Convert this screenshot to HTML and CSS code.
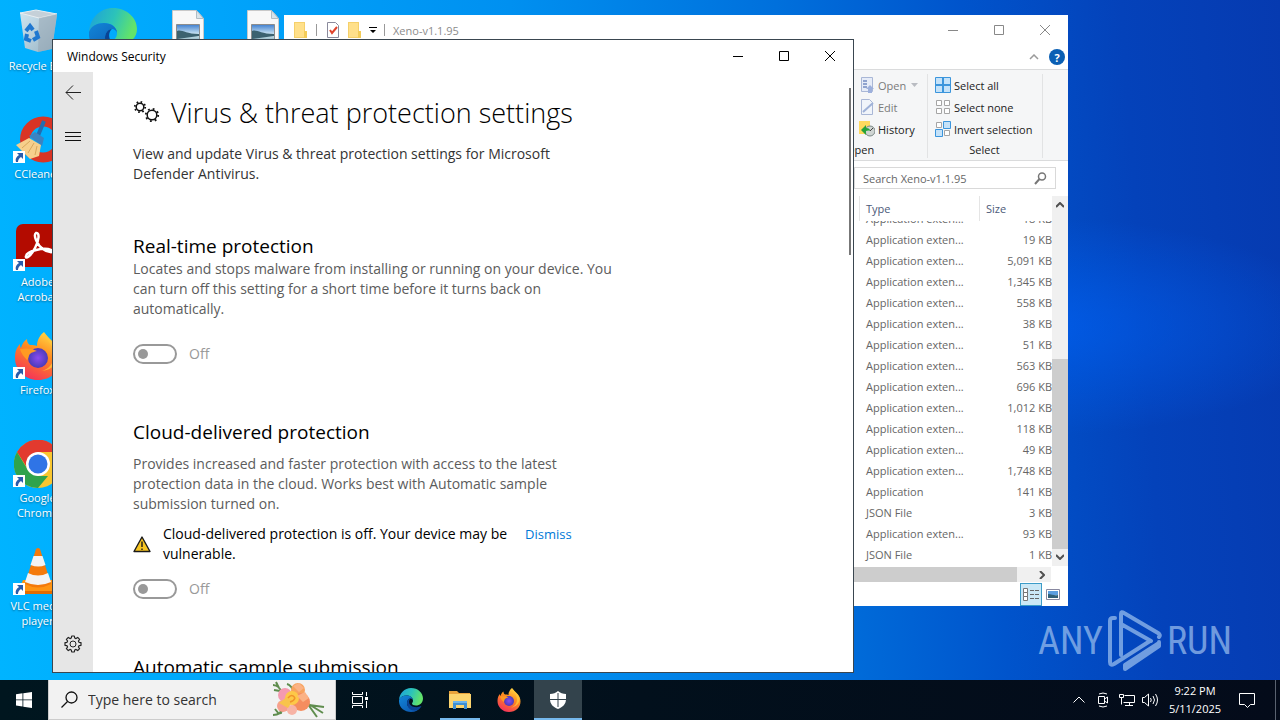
FILE: index.html
```html
<!DOCTYPE html>
<html lang="en">
<head>
    <meta charset="UTF-8">
    <meta name="viewport" content="width=device-width, initial-scale=1.0">
    <title>Desktop</title>
    <link rel="stylesheet" href="styles.css">
</head>
<body>
    <!-- shared symbols -->
    <svg class="symbols" aria-hidden="true">
        <defs>
            <linearGradient id="edgeTop" x1="0" y1="0" x2="1" y2="0.3">
                <stop offset="0" stop-color="#1c9fdd"/>
                <stop offset="0.55" stop-color="#2cc3b9"/>
                <stop offset="1" stop-color="#62e36a"/>
            </linearGradient>
            <linearGradient id="edgeLow" x1="0" y1="0" x2="1" y2="1">
                <stop offset="0" stop-color="#1286d8"/>
                <stop offset="1" stop-color="#0b4fa8"/>
            </linearGradient>
            <linearGradient id="foxFlame" x1="0.8" y1="0" x2="0.3" y2="1">
                <stop offset="0" stop-color="#ffe14a"/>
                <stop offset="0.45" stop-color="#ff8a1e"/>
                <stop offset="1" stop-color="#f4305c"/>
            </linearGradient>
            <radialGradient id="foxCore">
                <stop offset="0" stop-color="#8a4cf0"/>
                <stop offset="1" stop-color="#4a3bb8"/>
            </radialGradient>
            <linearGradient id="sky" x1="0" y1="0" x2="0" y2="1">
                <stop offset="0" stop-color="#3f7fd0"/>
                <stop offset="0.6" stop-color="#d7ecf5"/>
                <stop offset="1" stop-color="#7fa9b8"/>
            </linearGradient>
            <linearGradient id="bin" x1="0" y1="0" x2="1" y2="1">
                <stop offset="0" stop-color="#e4eaee"/>
                <stop offset="1" stop-color="#a8b4be"/>
            </linearGradient>
        </defs>
        <symbol id="edge" viewBox="0 0 48 48">
            <path fill="url(#edgeTop)" d="M0 24C1 10 11 0 24 0c14 0 24 10 24 21 0 9-7 14-14 14-5 0-8-2-8-4 0-1 2-2 2-6 0-6-6-10-13-10C8 15 2 19 0 24z"/>
            <path fill="url(#edgeLow)" d="M0 24c2-6 8-9 15-9 7 0 13 4 13 10-1-3-3-4-5-4-4 0-7 4-7 9 0 8 8 13 16 13 5 0 9-2 12-5-5 6-11 10-20 10C10 48-1 38 0 24z"/>
            <path fill="#0a4394" d="M16 30c0-5 3-9 7-9-5 4-4 15 8 17 6 1 10-1 14-2-3 6-9 9-14 9-9 0-15-7-15-15z"/>
        </symbol>
        <symbol id="firefox" viewBox="0 0 48 48">
            <path fill="url(#foxFlame)" d="M30 0c3 4 5 6 8 9 7 6 9 12 9 18 0 12-10 21-23 21S1 38 1 26c0-7 2-11 5-14 0 2 0 3 1 4 1-4 3-7 6-9 0 3 1 5 3 6 3 0 5 0 7 1 0-6 3-11 7-14z"/>
            <circle cx="24" cy="26" r="10" fill="url(#foxCore)"/>
            <path fill="#ff9a22" d="M6 17c5-1 12-1 17 2-3 1-5 1-7 3-2 2-1 5-3 6-3-3-6-7-7-11z"/>
            <path fill="#ffc53a" opacity="0.8" d="M30 1c1 8 10 10 10 22 0 8-5 14-12 16 10-1 17-8 17-17 0-8-8-13-15-21z"/>
        </symbol>
        <symbol id="photoFile" viewBox="0 0 48 48">
            <path fill="#f8f8f8" stroke="#c9c9c9" d="M8.500 2.500h24l7 8v35h-31z"/>
            <path fill="#d8e4ea" stroke="#b0bcc4" d="M32.500 2.500v8h7z"/>
            <path fill="url(#sky)" stroke="#8d8d8d" d="M12.500 16.500h23v17h-23z"/>
            <path fill="#3c6270" d="M13 23c5-2 8 3 22 3v2l-22 3z"/>
        </symbol>
        <symbol id="shortcut" viewBox="0 0 12 12">
            <path fill="#fff" d="M0 0h12v12H0z"/>
            <path fill="#2a5caa" d="M4 2h6v6L8 6c-2 1-3 3-3 5H3c-1-3 0-5 3-7z"/>
        </symbol>
        <symbol id="folder" viewBox="0 0 16 16">
            <path fill="#f5d06a" d="M1 0h11v16H1z"/>
            <path fill="#ffe08a" d="M2 1h9v14H2z"/>
            <path fill="#f3cc58" d="M11 9h3v7h-3z"/>
        </symbol>
    </svg>

    <div class="desktop">
        <div class="desktop-icons">
            <div class="icon-column">
                <div class="desktop-icon">
                    <svg viewBox="0 0 48 48">
                        <path fill="url(#bin)" fill-opacity="0.9" d="M6 5l37 2-5 34-14 3-13-4z"/>
                        <path fill="#c5d0d8" stroke="#e9eef1" d="M6 5l16-3 21 4-18 4z"/>
                        <path fill="#93a1ad" fill-opacity="0.5" d="M25 10l18-4-5 35-14 3z"/>
                        <path fill="none" stroke="#1f78d0" stroke-width="4" d="M12 23l4-5 3 4M22 23l2 6-5 3M17 33l-5-2 1-5"/>
                    </svg>
                    <span>Recycle Bin</span>
                </div>
                <div class="desktop-icon">
                    <svg viewBox="0 0 48 48">
                        <path fill="none" stroke="#d93425" stroke-width="10" d="M42 11A18 18 0 1 0 42 36"/>
                        <path stroke="#246cb0" stroke-width="4" d="M30 5L23 22"/>
                        <path fill="#3b83c2" d="M15 20l6-4 9 6-2 8z"/>
                        <path fill="#f6cf8c" d="M2 29l13-7 12 7-2 11-9 3z"/>
                        <path fill="none" stroke="#d8a75c" d="M8 32l8-7M14 37l6-10M21 39l2-9"/>
                    </svg>
                    <svg class="shortcut"><use href="#shortcut"/></svg>
                    <span>CCleaner</span>
                </div>
                <div class="desktop-icon">
                    <svg viewBox="0 0 48 48">
                        <rect x="2" y="0" width="46" height="43" rx="7" fill="#b30b00"/>
                        <path fill="none" stroke="#fff" stroke-width="2.500" d="M22 9c4-1 3 8-1 15-4 8-10 12-9 8 1-5 18-9 25-6 4 3-3 3-8-1C23 21 19 11 22 9z"/>
                    </svg>
                    <svg class="shortcut"><use href="#shortcut"/></svg>
                    <span>Adobe Acrobat</span>
                </div>
                <div class="desktop-icon">
                    <svg><use href="#firefox"/></svg>
                    <svg class="shortcut"><use href="#shortcut"/></svg>
                    <span>Firefox</span>
                </div>
                <div class="desktop-icon">
                    <svg viewBox="0 0 48 48">
                        <circle cx="24" cy="24" r="24" fill="#f9c62f"/>
                        <path fill="#e23a2e" d="M3 12a24 24 0 0 1 42 0H24L14 29z"/>
                        <path fill="#2fa34c" d="M3 12l11 18 10 6h10L24 48A24 24 0 0 1 3 12z"/>
                        <circle cx="24" cy="24" r="12" fill="#fff"/>
                        <circle cx="24" cy="24" r="9.500" fill="#2f74e6"/>
                    </svg>
                    <svg class="shortcut"><use href="#shortcut"/></svg>
                    <span>Google Chrome</span>
                </div>
                <div class="desktop-icon">
                    <svg viewBox="0 0 48 48">
                        <path fill="#ff9412" d="M9 32h30l8 14H3z"/>
                        <path fill="#e36c00" d="M4 43h42v3H3z"/>
                        <path fill="#f47a0b" d="M22 1q2-2 4 0l11 35q-13 7-26 0z"/>
                        <path fill="#f3f3f3" d="M19.500 8h9l3 9q-7 3-15 0zM14 25q10 5 20 0l3 9q-13 6-26 0z"/>
                    </svg>
                    <svg class="shortcut"><use href="#shortcut"/></svg>
                    <span>VLC media player</span>
                </div>
            </div>
            <div class="icon-column">
                <div class="desktop-icon"><svg><use href="#edge"/></svg></div>
            </div>
            <div class="icon-column">
                <div class="desktop-icon"><svg><use href="#photoFile"/></svg></div>
            </div>
            <div class="icon-column">
                <div class="desktop-icon"><svg><use href="#photoFile"/></svg></div>
            </div>
        </div>

        <div class="watermark">
            <span>ANY</span>
            <svg width="56" height="62" viewBox="0 0 56 62">
                <path fill="none" stroke="currentColor" stroke-width="4" stroke-linejoin="round" stroke-linecap="round" d="M8 8H6q-3 0-3 3v41q0 4 4 2l36-23M14 36V4q0-3 3-1l34 20q3 2 1 4M14 14l30 17M14 45V20M52 33L18 55v4l34-23v-4"/>
            </svg>
            <span>RUN</span>
        </div>

        <!-- file explorer -->
        <section class="window explorer">
            <header class="explorer-title">
                <svg width="16" height="16"><use href="#folder"/></svg>
                <i class="separator"></i>
                <svg class="quick" width="16" height="16" viewBox="0 0 16 16">
                    <path fill="#fff" stroke="#8a8a9c" d="M2.500.5h8l3 3v12h-11z"/>
                    <path fill="none" stroke="#e0442c" stroke-width="2" d="M5 8l2 3 5-6"/>
                </svg>
                <svg width="16" height="16"><use href="#folder"/></svg>
                <svg class="drop" width="8" height="8" viewBox="0 0 8 8"><path d="M0 1h8v1H0zM1 4h6L4 7z"/></svg>
                <i class="separator"></i>
                <span class="explorer-name">Xeno-v1.1.95</span>
                <div class="caption-buttons">
                    <button aria-label="Minimize"><svg width="12" height="12" viewBox="0 0 12 12"><path d="M1 6.500h10"/></svg></button>
                    <button aria-label="Maximize"><svg width="12" height="12" viewBox="0 0 12 12"><path d="M1.500 1.500h9v9h-9z"/></svg></button>
                    <button aria-label="Close"><svg width="12" height="12" viewBox="0 0 12 12"><path d="M1 1l10 10M11 1L1 11"/></svg></button>
                </div>
            </header>
            <div class="explorer-tabs">
                <button aria-label="Collapse ribbon"><svg width="10" height="6" viewBox="0 0 10 6"><path fill="none" stroke="#9a9a9a" stroke-width="1.500" d="M1 5l4-4 4 4"/></svg></button>
                <button class="help" aria-label="Help">?</button>
            </div>
            <div class="ribbon">
                <div class="ribbon-group open-group">
                    <button class="dim">
                        <svg width="16" height="16" viewBox="0 0 16 16"><path fill="#e6ecf8" stroke="#a9b7d6" d="M2.500.5h11v14h-11z"/><path stroke="#8fa3cf" stroke-width="2" d="M4 4h4M4 7h4M4 10h4"/><path fill="#9db0dc" d="M9 16v-4H7l4-4 4 4h-2v4z"/></svg>
                        Open
                        <svg class="arrow" width="7" height="4" viewBox="0 0 7 4"><path fill="#b9bcc2" d="M0 0h7L3.500 4z"/></svg>
                    </button>
                    <button class="dim">
                        <svg width="16" height="16" viewBox="0 0 16 16"><path fill="#f0f4fa" stroke="#a9b7d6" d="M2.500.5h8l3 3v12h-11z"/><path stroke="#9fb2d8" stroke-width="2" d="M4 13L14 4"/></svg>
                        Edit
                    </button>
                    <button>
                        <svg width="16" height="16" viewBox="0 0 16 16"><path fill="#ffd95e" d="M0 0h11v13H0z"/><circle cx="11" cy="10" r="5" fill="#cfd5d3" stroke="#7a8785"/><path fill="#27a23b" d="M2 9l5-5v3c3 0 4 1 4 3-2-1-3 0-4 0v4z"/><path stroke="#444" d="M11 10l3-3"/></svg>
                        History
                    </button>
                    <span class="group-name">Open</span>
                </div>
                <div class="ribbon-group select-group">
                    <button>
                        <svg width="16" height="16" viewBox="0 0 16 16"><path fill="#c4e2f9" stroke="#3b95dc" d="M.5.5h15v15H.5z"/><path stroke="#3b95dc" stroke-width="2" d="M8 0v16M0 8h16"/></svg>
                        Select all
                    </button>
                    <button>
                        <svg width="16" height="16" viewBox="0 0 16 16"><path fill="#fff" stroke="#a5a5a5" d="M1.500 1.500h5v5h-5zM9.500 1.500h5v5h-5zM1.500 9.500h5v5h-5zM9.500 9.500h5v5h-5z"/></svg>
                        Select none
                    </button>
                    <button>
                        <svg width="16" height="16" viewBox="0 0 16 16"><path fill="#fff" stroke="#a5a5a5" d="M1.500 1.500h5v5h-5zM9.500 9.500h5v5h-5z"/><path fill="#c4e2f9" stroke="#3b95dc" d="M8.500.5h7v7h-7zM.5 8.500h7v7h-7z"/></svg>
                        Invert selection
                    </button>
                    <span class="group-name">Select</span>
                </div>
            </div>
            <div class="explorer-search">
                <input type="text" placeholder="Search Xeno-v1.1.95" aria-label="Search Xeno-v1.1.95">
                <svg width="13" height="13" viewBox="0 0 13 13"><circle cx="8" cy="4.500" r="3.500" fill="none" stroke="#777" stroke-width="1.500"/><path stroke="#777" stroke-width="2" d="M5.500 7L1 12"/></svg>
            </div>
            <div class="explorer-body">
                <div class="file-list">
                    <div class="list-header">
                        <button class="col-type">Type</button>
                        <button class="col-size">Size</button>
                    </div>
                    <div class="list-rows">
                        <table>
                            <tbody id="fileRows"></tbody>
                        </table>
                    </div>
                </div>
                <div class="scroll-vertical">
                    <svg width="8" height="6" viewBox="0 0 8 6"><path d="M0 5l4-4 4 4"/></svg>
                    <div class="thumb"></div>
                    <svg width="8" height="6" viewBox="0 0 8 6"><path d="M0 1l4 4 4-4"/></svg>
                </div>
            </div>
            <div class="scroll-horizontal">
                <div class="thumb"></div>
                <svg width="6" height="8" viewBox="0 0 6 8"><path d="M1 0l4 4-4 4"/></svg>
            </div>
            <footer class="explorer-status">
                <button class="active" aria-label="Details view"><svg width="16" height="14" viewBox="0 0 16 14"><path fill="#fff" stroke="#777" d="M.5.5h4v4h-4zM.5 4.500h4v4h-4zM.5 8.500h4v4h-4z"/><path stroke="#666" d="M7 2.500h4M12 2.500h4M7 6.500h4M12 6.500h4M7 10.500h4M12 10.500h4"/></svg></button>
                <button aria-label="Large icons view"><svg width="14" height="11" viewBox="0 0 14 11"><path fill="#fff" stroke="#8888a0" d="M.5.5h13v10H.5z"/><path fill="#5b9ee0" d="M2 2h10v4H2z"/><path fill="#2f5f78" d="M2 5c4 0 6 2 10 1v3H2z"/></svg></button>
            </footer>
        </section>

        <!-- windows security -->
        <section class="window security">
            <header class="security-title">
                <span>Windows Security</span>
                <div class="caption-buttons">
                    <button aria-label="Minimize"><svg width="12" height="12" viewBox="0 0 12 12"><path d="M1 6.500h10"/></svg></button>
                    <button aria-label="Maximize"><svg width="12" height="12" viewBox="0 0 12 12"><path d="M1.500 1.500h9v9h-9z"/></svg></button>
                    <button aria-label="Close"><svg width="12" height="12" viewBox="0 0 12 12"><path d="M1 1l10 10M11 1L1 11"/></svg></button>
                </div>
            </header>
            <div class="security-body">
                <nav class="side-nav">
                    <button aria-label="Back"><svg width="16" height="16" viewBox="0 0 16 16"><path fill="none" stroke="#222" d="M16 8.500H1M8 1.500l-7 7 7 7"/></svg></button>
                    <button aria-label="Menu"><svg width="16" height="16" viewBox="0 0 16 16"><path stroke="#111" d="M0 4.500h16M0 8.500h16M0 12.500h16"/></svg></button>
                    <button class="settings" aria-label="Settings">
                        <svg width="18" height="18" viewBox="0 0 18 18"><path fill="none" stroke="#222" stroke-width="1.200" stroke-linejoin="round" d="M7.700 1h2.600l.4 2 1.300.6L13.700 2.400l1.900 1.900-1.200 1.700.6 1.300 2 .4v2.600l-2 .4-.6 1.300 1.200 1.700-1.900 1.900-1.700-1.200-1.300.6-.4 2H7.700l-.4-2-1.300-.6-1.700 1.200-1.900-1.900L3.600 12 3 10.700l-2-.4V7.700l2-.4L3.600 6 2.400 4.300l1.900-1.900L6 3.600 7.300 3z"/><circle cx="9" cy="9" r="3" fill="none" stroke="#222"/></svg>
                    </button>
                </nav>
                <main class="settings-page">
                    <h1>
                        <svg width="28" height="28" viewBox="0 0 28 28">
                            <g fill="none" stroke="#111">
                                <circle cx="7" cy="8" r="3.800" stroke-width="1.500"/>
                                <circle cx="7" cy="8" r="5.200" stroke-width="1.800" stroke-dasharray="1.600 2.484"/>
                                <circle cx="19" cy="16" r="4.800" stroke-width="1.500"/>
                                <circle cx="19" cy="16" r="6.200" stroke-width="1.800" stroke-dasharray="1.800 3.070"/>
                            </g>
                        </svg>
                        Virus &amp; threat protection settings
                    </h1>
                    <p class="intro">View and update Virus &amp; threat protection settings for Microsoft Defender Antivirus.</p>

                    <section class="setting">
                        <h2>Real-time protection</h2>
                        <p class="wide">Locates and stops malware from installing or running on your device. You can turn off this setting for a short time before it turns back on automatically.</p>
                        <label class="toggle first-toggle"><input type="checkbox" disabled><span>Off</span></label>
                    </section>

                    <section class="setting">
                        <h2>Cloud-delivered protection</h2>
                        <p class="spaced">Provides increased and faster protection with access to the latest protection data in the cloud. Works best with Automatic sample submission turned on.</p>
                        <div class="warning">
                            <svg width="18" height="18" viewBox="0 0 18 18"><path fill="#f7c520" stroke="#1a1a1a" stroke-width="1.400" stroke-linejoin="round" d="M9 2l8 14.500H1z"/><path stroke="#1a1a1a" stroke-width="1.400" d="M9 6.500v5.500M9 13.500V15"/></svg>
                            <span class="warning-text">Cloud-delivered protection is off. Your device may be vulnerable.</span>
                            <a href="#">Dismiss</a>
                        </div>
                        <label class="toggle"><input type="checkbox" disabled><span>Off</span></label>
                    </section>

                    <section class="setting">
                        <h2>Automatic sample submission</h2>
                    </section>
                    <div class="page-scroll"></div>
                </main>
            </div>
        </section>
    </div>

    <footer class="taskbar">
        <button class="start" aria-label="Start"><svg width="16" height="16" viewBox="0 0 16 16"><path fill="#fff" d="M0 2.300l6.500-1v6.200H0zM7.300 1.200L16 0v7.500H7.300zM0 8.300h6.500v6.300l-6.500-1zM7.300 8.300H16V16l-8.700-1.300z"/></svg></button>
        <div class="task-search">
            <svg width="17" height="17" viewBox="0 0 17 17"><circle cx="10.500" cy="6.500" r="5.500" fill="none" stroke="#111" stroke-width="1.300"/><path stroke="#111" stroke-width="1.300" d="M6.500 10.500L.5 16.500"/></svg>
            <input type="text" placeholder="Type here to search" aria-label="Type here to search">
            <svg class="flowers" width="54" height="38" viewBox="0 0 54 38">
                <g fill="none" stroke="#5f8d4e" stroke-width="2">
                    <path d="M2 4c4 0 8 4 10 9M3 9l6 1M5 1l3 6M16 3c4 1 6 5 8 9M2 34c5 0 9-2 12-8M4 28l4 5M9 27l1 6M36 22l16 10M36 22l10 14M38 24l15 2"/>
                </g>
                <circle cx="14" cy="14" r="7" fill="#f49ab0"/>
                <circle cx="27" cy="9" r="7" fill="#f7a35e"/>
                <circle cx="12" cy="25" r="6" fill="#f6a08e"/>
                <circle cx="30" cy="21" r="9" fill="#f58d5f"/>
                <circle cx="21" cy="29" r="5" fill="#f7b3a5"/>
                <circle cx="21" cy="17" r="7" fill="#fdc848"/>
                <path fill="#fbb284" d="M26 15l8-4 4 6-6 4zM22 5l6-3 5 5-5 4z"/>
                <path fill="#f8c44a" d="M8 22l8-6 6 4-5 7z"/>
                <path fill="none" stroke="#f0932a" stroke-width="1.500" d="M17 17q4-5 7 0M19 21q4-1 5-4"/>
            </svg>
        </div>
        <button class="task-view" aria-label="Task View"><svg width="16" height="16" viewBox="0 0 16 16"><path fill="none" stroke="#fff" d="M.5 0v2.500h10V0M.5 4.500h10v7H.5zM.5 16v-2.500h10V16M14.500 0v4M14.500 9v7"/><path fill="#fff" d="M13 5h3v3h-3z"/></svg></button>
        <div class="task-apps">
            <button aria-label="Microsoft Edge"><svg width="24" height="24"><use href="#edge"/></svg></button>
            <button class="running" aria-label="File Explorer">
                <svg width="22" height="20" viewBox="0 0 22 20"><path fill="#e9a33b" d="M0 1h8l2 2h11v4H0z"/><path fill="#fcd46e" d="M0 4h22v14H0z"/><path fill="#3f8fd2" d="M4 11h14v8h-3v-4H7v4H4z"/><path fill="#6cb4ec" d="M4 11h14v2H4z"/></svg>
            </button>
            <button aria-label="Firefox"><svg width="24" height="24"><use href="#firefox"/></svg></button>
            <button class="current" aria-label="Windows Security">
                <svg width="18" height="18" viewBox="0 0 18 18"><path fill="#fff" d="M9 0c2 2 5 3 8 3v5c0 5-3 8-8 10-5-2-8-5-8-10V3c3 0 6-1 8-3z"/><path stroke="#33434c" d="M9 2v14M1 8.500h16"/></svg>
            </button>
        </div>
        <div class="tray">
            <button aria-label="Show hidden icons"><svg width="12" height="8" viewBox="0 0 12 8"><path d="M.5 6.500L6 1l5.500 5.500"/></svg></button>
            <button aria-label="Camera"><svg width="12" height="16" viewBox="0 0 12 16"><path d="M1.500 4.500h6v7h-6zM7.500 7l3-2v6l-3-2M2 2q4-2 8 0M2 14q4 2 8 0"/></svg></button>
            <button aria-label="Network"><svg width="16" height="14" viewBox="0 0 16 14"><path d="M5.500 2.500h10v7h-11M.5 1.500h4v3h-4zM2.500 4.500v7M10.500 9.500v3M6 12.500h8"/></svg></button>
            <button aria-label="Volume"><svg width="18" height="14" viewBox="0 0 18 14"><path d="M.5 4.500h2l4-3.500v12l-4-3.500h-2zM8.500 5q1.500 2 0 4M11 3q3 4 0 8M13.500 1q4 6 0 12"/></svg></button>
            <button class="clock"><span>9:22 PM</span><span>5/11/2025</span></button>
            <button class="notify" aria-label="Notifications"><svg width="16" height="16" viewBox="0 0 16 16"><path d="M.5 1.500h15v11h-4l-3 3-3-3h-5z"/></svg></button>
            <button class="show-desktop" aria-label="Show desktop"></button>
        </div>
    </footer>

    <script>
        const files = [
            ["Application exten...", "18 KB"],
            ["Application exten...", "19 KB"],
            ["Application exten...", "5,091 KB"],
            ["Application exten...", "1,345 KB"],
            ["Application exten...", "558 KB"],
            ["Application exten...", "38 KB"],
            ["Application exten...", "51 KB"],
            ["Application exten...", "563 KB"],
            ["Application exten...", "696 KB"],
            ["Application exten...", "1,012 KB"],
            ["Application exten...", "118 KB"],
            ["Application exten...", "49 KB"],
            ["Application exten...", "1,748 KB"],
            ["Application", "141 KB"],
            ["JSON File", "3 KB"],
            ["Application exten...", "93 KB"],
            ["JSON File", "1 KB"]
        ];

        const fileRows = document.getElementById("fileRows");

        files.forEach(file => {
            const row = document.createElement("tr");
            file.forEach(value => {
                const cell = document.createElement("td");
                cell.textContent = value;
                row.appendChild(cell);
            });
            fileRows.appendChild(row);
        });
    </script>
</body>
</html>
```
FILE: styles.css
```css
* {
    box-sizing: border-box;
}

body {
    margin: 0;
    height: 100vh;
    display: flex;
    flex-direction: column;
    overflow: hidden;
    font-family: "Open Sans", "Noto Sans", sans-serif;
    font-size: 11px;
    color: #000;
}

h1, h2, p {
    margin: 0;
    font-weight: normal;
}

button {
    display: flex;
    align-items: center;
    justify-content: center;
    padding: 0;
    border: none;
    background: none;
    font: inherit;
    color: inherit;
}

input {
    font: inherit;
}

svg {
    display: block;
    flex-shrink: 0;
}

.symbols {
    position: absolute;
    width: 0;
    height: 0;
}

/* desktop */
.desktop {
    position: relative;
    flex: 1;
    overflow: hidden;
    background:
        radial-gradient(ellipse at 80% 48%, rgba(0, 98, 245, 0.7), rgba(0, 90, 230, 0) 22%),
        linear-gradient(86deg, #00b4ff 0%, #00a6fc 18%, #0090f0 42%, #0070dc 62%, #0054cc 76%, #0442ba 88%, #063ab0 100%);
}

.desktop-icons {
    display: flex;
}

.icon-column {
    width: 75px;
}

.desktop-icon {
    position: relative;
    display: flex;
    flex-direction: column;
    align-items: center;
    gap: 2px;
    height: 108px;
    padding: 8px 4px 0;
    line-height: 15px;
    text-align: center;
    color: #fff;
    text-shadow: 0 1px 2px rgba(0, 0, 0, 0.4);
}

.desktop-icon svg {
    width: 48px;
    height: 48px;
}

.desktop-icon .shortcut {
    position: absolute;
    left: 13px;
    top: 43px;
    width: 12px;
    height: 12px;
}

.watermark {
    position: absolute;
    right: 48px;
    bottom: 8px;
    display: flex;
    align-items: center;
    gap: 4px;
    font-family: "Liberation Sans Narrow", "Roboto Condensed", "Liberation Sans", sans-serif;
    font-size: 38px;
    color: rgba(160, 195, 240, 0.7);
}

/* windows */
.window {
    position: absolute;
    display: flex;
    flex-direction: column;
    background-color: #fff;
}

.caption-buttons {
    display: flex;
    align-self: stretch;
    margin-left: auto;
}

.caption-buttons button {
    width: 46px;
}

.caption-buttons path {
    fill: none;
    stroke: #000;
}

/* file explorer */
.explorer {
    left: 284px;
    top: 15px;
    width: 784px;
    height: 591px;
    color: #666;
}

.explorer-title {
    display: flex;
    align-items: center;
    height: 30px;
    padding-left: 9px;
}

.separator {
    width: 1px;
    height: 12px;
    margin: 0 8px 0 7px;
    background-color: #999;
}

.quick {
    margin-right: 6px;
}

.drop {
    margin-left: 6px;
}

.explorer-name {
    color: #8c8c8c;
}

.explorer-title .caption-buttons path {
    stroke: #888;
}

.explorer-tabs {
    display: flex;
    align-items: center;
    justify-content: flex-end;
    gap: 10px;
    height: 24px;
    padding-right: 3px;
}

.help {
    width: 16px;
    height: 16px;
    border-radius: 50%;
    background-color: #0a5fb4;
    color: #fff;
    font-weight: bold;
}

.ribbon {
    display: flex;
    justify-content: flex-end;
    height: 92px;
    padding: 4px 25px 0 0;
    background-color: #f5f6f7;
    border-top: 1px solid #dadbdc;
    border-bottom: 1px solid #dadbdc;
    color: #222;
}

.ribbon-group {
    display: flex;
    flex-direction: column;
    align-items: flex-start;
    height: 84px;
    border-right: 1px solid #e2e3e4;
}

.ribbon-group button {
    flex-shrink: 0;
    gap: 3px;
    height: 22px;
}

.open-group {
    width: 69px;
}

.select-group {
    width: 115px;
    padding-left: 7px;
}

.ribbon .dim {
    color: #7a7a7a;
}

.ribbon .arrow {
    margin-left: 2px;
}

.group-name {
    line-height: 20px;
}

.open-group .group-name {
    margin-left: -13px;
}

.select-group .group-name {
    align-self: center;
    padding-right: 8px;
}

.explorer-search {
    display: flex;
    align-items: center;
    align-self: flex-end;
    width: 202px;
    height: 22px;
    margin: 6px 12px 7px 0;
    padding: 0 8px;
    border: 1px solid #d9d9d9;
}

.explorer-search input {
    flex: 1;
    min-width: 0;
    padding: 0;
    border: none;
    outline: none;
}

.explorer-search input::placeholder {
    color: #666;
}

.explorer-body {
    flex: 1;
    display: flex;
    min-height: 0;
}

.file-list {
    flex: 1;
    display: flex;
    flex-direction: column;
    align-items: flex-end;
    min-height: 0;
}

.list-header {
    display: flex;
    height: 25px;
    color: #4c5a78;
}

.list-header button {
    justify-content: flex-start;
    padding-left: 6px;
    border-left: 1px solid #e5e5e5;
}

.col-type {
    width: 120px;
}

.col-size {
    width: 73px;
}

.list-rows {
    flex: 1;
    display: flex;
    flex-direction: column;
    justify-content: flex-end;
    width: 193px;
    min-height: 0;
    padding-bottom: 1px;
    overflow: hidden;
}

.list-rows table {
    border-collapse: collapse;
}

.list-rows td {
    height: 21px;
    padding: 0 0 0 7px;
    white-space: nowrap;
}

.list-rows td:last-child {
    padding: 0;
    text-align: right;
}

.scroll-vertical {
    display: flex;
    flex-direction: column;
    align-items: center;
    width: 16px;
    padding: 6px 0;
    background-color: #f0f0f0;
}

.scroll-vertical path,
.scroll-horizontal path {
    fill: none;
    stroke: #505050;
    stroke-width: 2;
}

.scroll-vertical .thumb {
    width: 100%;
    height: 190px;
    margin: auto 0 5px;
    background-color: #cdcdcd;
}

.scroll-horizontal {
    display: flex;
    align-items: center;
    height: 15px;
    margin: 1px 17px 1px 0;
    padding-right: 6px;
    background-color: #f0f0f0;
}

.scroll-horizontal .thumb {
    flex: 1;
    height: 100%;
    margin-right: 22px;
    background-color: #cdcdcd;
}

.explorer-status {
    display: flex;
    justify-content: flex-end;
    gap: 4px;
    height: 23px;
    padding-right: 8px;
}

.explorer-status .active {
    width: 22px;
    background-color: #cbe8f6;
    border: 1px solid #3c9cc8;
}

/* windows security */
.security {
    left: 52px;
    top: 39px;
    width: 802px;
    height: 634px;
    border: 1px solid #3a4650;
}

.security-title {
    display: flex;
    align-items: center;
    height: 32px;
    padding-left: 14px;
    font-size: 12px;
}

.security-body {
    flex: 1;
    display: flex;
    min-height: 0;
}

.side-nav {
    display: flex;
    flex-direction: column;
    gap: 4px;
    width: 40px;
    background-color: #e6e6e6;
}

.side-nav button {
    height: 40px;
}

.side-nav .settings {
    margin-top: auto;
    margin-bottom: 8px;
}

.settings-page {
    position: relative;
    flex: 1;
    overflow: hidden;
    padding: 23px 40px 0;
    font-size: 14px;
    line-height: 20px;
}

.settings-page h1 {
    display: flex;
    align-items: center;
    gap: 10px;
    font-size: 27px;
    font-weight: 300;
    line-height: 36px;
}

.settings-page p {
    max-width: 460px;
    color: #5c5c5c;
}

.settings-page .wide {
    max-width: 490px;
}

.settings-page .intro {
    margin: 13px 0 50px;
    color: #333;
}

.settings-page .spaced {
    margin-top: 9px;
}

.setting {
    margin-bottom: 56px;
}

.setting h2 {
    font-size: 19px;
    line-height: 25px;
}

.toggle {
    display: flex;
    align-items: center;
    gap: 12px;
    margin-top: 15px;
    color: #999;
}

.first-toggle {
    margin-top: 25px;
}

.toggle input {
    appearance: none;
    display: flex;
    align-items: center;
    width: 44px;
    height: 20px;
    margin: 0;
    padding-left: 3px;
    border: 2px solid #999;
    border-radius: 10px;
}

.toggle input::before {
    content: "";
    width: 10px;
    height: 10px;
    border-radius: 50%;
    background-color: #999;
}

.warning {
    display: flex;
    gap: 12px;
    margin-top: 10px;
}

.warning svg {
    align-self: center;
}

.warning-text {
    width: 350px;
}

.warning a {
    font-size: 13px;
    color: #0078d7;
    text-decoration: none;
}

.page-scroll {
    position: absolute;
    right: 2px;
    top: 16px;
    width: 2px;
    height: 167px;
    background-color: #777;
}

/* taskbar */
.taskbar {
    display: flex;
    height: 40px;
    background: linear-gradient(90deg, #00161f, #02101c 50%, #040b1a);
    color: #fff;
}

.start,
.task-view {
    width: 48px;
}

.task-search {
    display: flex;
    align-items: center;
    gap: 10px;
    width: 288px;
    padding: 0 10px 0 12px;
    background-color: #f2f2f2;
    border: 1px solid #ccc;
    border-top: none;
}

.task-search input {
    flex: 1;
    min-width: 0;
    padding: 0;
    border: none;
    outline: none;
    background: none;
    font-size: 14px;
}

.task-search input::placeholder {
    color: #333;
}

.task-apps {
    display: flex;
    gap: 1px;
    margin-left: 3px;
}

.task-apps button {
    position: relative;
    width: 48px;
}

.task-apps .current {
    background-color: #33434c;
}

.running::after,
.current::after {
    content: "";
    position: absolute;
    left: 4px;
    right: 4px;
    bottom: 0;
    height: 2px;
    background-color: #76b9ed;
}

.current::after {
    left: 0;
    right: 0;
}

.tray {
    display: flex;
    margin-left: auto;
}

.tray button {
    width: 24px;
}

.tray path {
    fill: none;
    stroke: #fff;
}

.tray .clock {
    flex-direction: column;
    width: 64px;
    line-height: 18px;
}

.tray .notify {
    width: 40px;
}

.tray .show-desktop {
    width: 5px;
    margin-left: 8px;
    border-left: 1px solid #5a6270;
}
```
